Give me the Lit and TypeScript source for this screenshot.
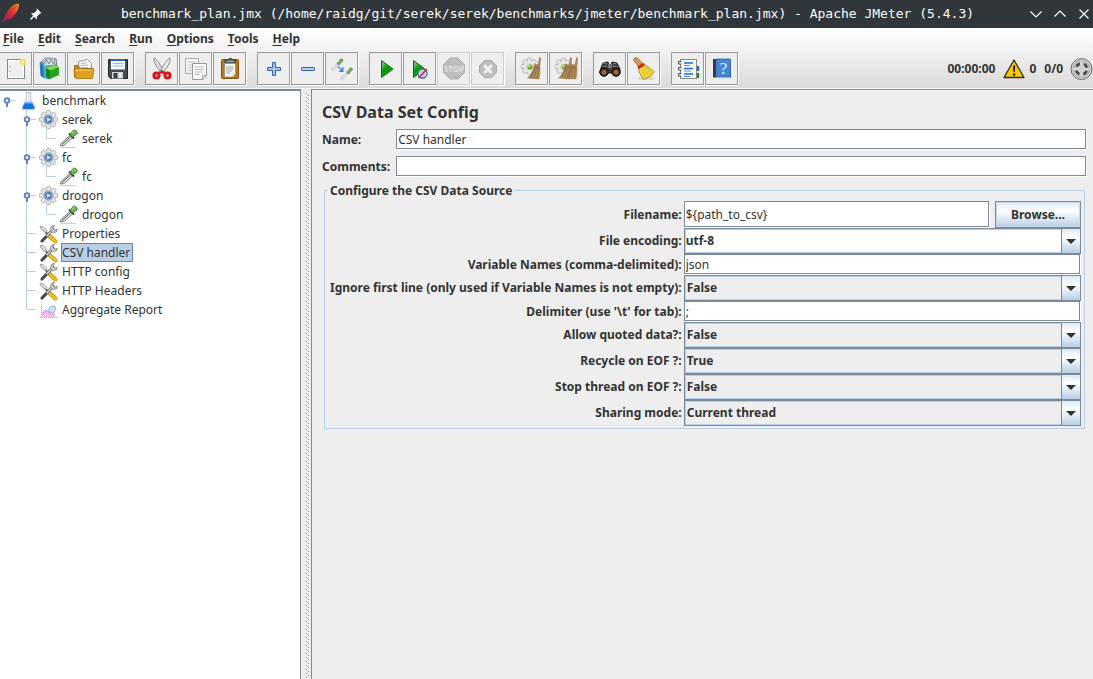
import { LitElement, html, css, svg, nothing } from "lit";
import { customElement, property, state } from "lit/decorators.js";

const gearTeeth = (cx: number, cy: number, r: number, w: number) =>
  Array.from({ length: 8 }, (_, i) => svg`<rect x=${cx - w / 2} y=${cy - r} width=${w} height=${r} rx="1" transform=${`rotate(${i * 45} ${cx} ${cy})`}/>`);

const broom = (dx: number) => svg`<g transform=${`translate(${dx} 0)`}>
  <path d="M19.500 .5l1.200.4-.7 8-2.200-.4z" fill="#b98a55" stroke="#8a6435" stroke-width=".4"/>
  <path d="M14.500 7l5 1.500c.8 4 .5 9-.5 13.500L7.500 21c4-3 6-8 7-14z" fill="#b08a5a" stroke="#94724a" stroke-width=".5"/>
  <path d="M16 9L10 21M17.500 9l-4 13M19 10l-2 12M15 11l-4 9" stroke="#86643a" stroke-width=".6" fill="none"/>
  <path d="M14 9.500l6 1.500" stroke="#a8553a" stroke-width=".8"/></g>`;

const smallGear = svg`<g fill="#dcdcdc" stroke="#b0b0b0" stroke-width=".8">${gearTeeth(9.5, 9.5, 8.5, 4)}<circle cx="9.500" cy="9.500" r="6.300" fill="#e4e4e4"/></g>
  <g fill="#e6e6e6">${gearTeeth(9.5, 9.5, 7.8, 3)}</g><circle cx="10" cy="10" r="3" fill="#62ad27" stroke="#c2cfb6"/><circle cx="9.300" cy="9" r="1.200" fill="#b9ee7c"/>`;

const toolIcons: Record<string, unknown> = {
  new: svg`<rect x="3.500" y="2.500" width="17" height="19" fill="#efefef" stroke="#8b8b8b"/><rect x="4.500" y="3.500" width="15" height="17" fill="none" stroke="#fff"/>
    <path d="M5 9.500h1.500M5 14.500h1.500" stroke="#aaa"/><circle cx="19" cy="5" r="3.600" fill="#fff9c0" opacity=".7"/><circle cx="19" cy="5" r="2.200" fill="#fff" stroke="#ecd936" stroke-width="1.300"/>`,
  templates: svg`<path d="M2 6l3-3 5-2 8 1 1 7-8 13-8-3z" fill="#3a93b9" stroke="#2b6d8c" stroke-width=".6"/>
    <path d="M4 4l3-3 11 .5.500 6-5 1-8 1z" fill="#d4dadc" stroke="#7d8a90" stroke-width=".8"/><path d="M6 8l2-6 3 5 2-5 3 5 1-5M9 2l-4 5" fill="none" stroke="#82929a"/>
    <path d="M2 8l3-1 1 14-3-2z" fill="#1e78c0"/><path d="M6 9l3-1v14l-3-1z" fill="#49b2dc"/>
    <path d="M8 11l8-3 5 2v8l-9 4-4-2z" fill="#28a321"/><path d="M8 11l8-3 5 2-9 3.500z" fill="#7ddc4d"/><path d="M8 11l4 2.500V22l-4-2z" fill="#178616"/>`,
  open: svg`<path d="M6.500 13V4.500l9-2 4 4V13z" fill="#f8f8f8" stroke="#999"/><path d="M9 6.500l6-1M9 8.500l7-.5M9 10.500h7" stroke="#aaa" stroke-width=".8"/>
    <path d="M2.500 20V8.500h4l1 3h13V20z" fill="#c98a1a" stroke="#8f5902" stroke-width=".8"/><path d="M2 12h20l-1.500 9.500h-17z" fill="#e0a128" stroke="#a96e08" stroke-width=".8"/><path d="M3.500 13h17" stroke="#ffd577"/>`,
  save: svg`<path d="M2.500 2.500h19v19h-17l-2-2z" fill="#484b4d" stroke="#242628"/><path d="M5 2.500h14v10H5z" fill="#eef5fb"/><path d="M5 2h14v2H5z" fill="#356ca8"/><path d="M6.500 6.500h11M6.500 9h11" stroke="#9ebed8"/>
    <path d="M6 15h11v6.500H6z" fill="#d4d6d5"/><rect x="7.500" y="16" width="4" height="5" fill="#393c3e"/><path d="M14 16v5" stroke="#fff"/>`,
  cut: svg`<path d="M4 1c2.500 0 8.500 11 10.500 14l-3 1C8.500 12 3 6 4 1z" fill="#dcdedc" stroke="#808280" stroke-width=".9"/><path d="M20 1c-2.500 0-8.500 11-10.500 14l3 1C15.500 12 21 6 20 1z" fill="#ececeb" stroke="#808280" stroke-width=".9"/>
    <circle cx="12" cy="13.500" r=".9" fill="#666"/><g fill="none" stroke="#d31a1a" stroke-width="3"><ellipse cx="6.500" cy="18.500" rx="2.600" ry="2.400"/><ellipse cx="17.500" cy="18.500" rx="2.600" ry="2.400"/><path d="M7.500 16.500l4-1.500 5 1.500" stroke-width="2.400"/></g>`,
  copy: svg`<path d="M1.500 1.500h13v15h-13z" fill="#f4f4f2" stroke="#aaa"/><path d="M4 5h8M4 8h5M4 11h5M4 13.500h5" stroke="#c2c2c2"/><path d="M8.500 6.500h14v12l-4 4h-10z" fill="#fbfbfa" stroke="#999"/><path d="M11 10h9M11 12.500h9M11 15h8M11 17.500h5" stroke="#b9b9b9"/><path d="M18.500 22.500v-4h4z" fill="#ddd" stroke="#999" stroke-width=".7"/>`,
  paste: svg`<rect x="3.500" y="2.500" width="17" height="19" rx="1" fill="#b9761d" stroke="#835108"/><path d="M6.500 5.500h11v12l-3 2.500h-8z" fill="#f5f5f3" stroke="#888" stroke-width=".7"/><path d="M8 10h7.500M8 12h7.500M8 14h6M8 16h4" stroke="#aaa"/><path d="M14.500 20v-3h3z" fill="#ccc"/>
    <path d="M7 6V3h3l1-1.500h2.500l1 1.500h3v3z" fill="#686a66" stroke="#3d3f3b"/><path d="M8.500 4.500H16" stroke="#aaa"/>`,
  plus: svg`<path d="M10.500 5.500h3v5h5v3h-5v5h-3v-5h-5v-3h5z" fill="#a4c3e5" stroke="#3465a4" stroke-linejoin="round"/>`,
  minus: svg`<rect x="5.500" y="10.500" width="13" height="3" rx=".5" fill="#b9d1eb" stroke="#3465a4"/>`,
  toggle: svg`${[[0, 0], [9.5, 9]].map(([x, y]) => svg`<g transform=${`translate(${x} ${y})`}><path d="M1.500 12.500l.5-1.500 5-4 1.500 1L4 12z" fill="#ececec" stroke="#b0b0b0" stroke-width=".7"/><path d="M7 5.500l2.500 2.500" stroke="#777" stroke-width="1.200"/><path d="M8 6l2-3.500c1-1.300 3.500-.5 3 1.200L9.500 7.500z" fill="#74aa5a" stroke="#6a9455" stroke-width=".6"/></g>`)}
    <path d="M7.500 9.500l4 3" stroke="#3a8cf5" stroke-width="1.300"/><path d="M13.500 9.500V15H8.500z" fill="#3a8cf5"/><path d="M1 14h5M10 23h6" stroke="#ddd"/>`,
  start: svg`<defs><linearGradient id="sg" x2=".6" y2="1"><stop offset="0" stop-color="#a4d8a0"/><stop offset=".5" stop-color="#109510"/><stop offset="1" stop-color="#00b000"/></linearGradient></defs><path d="M7.500 3.500L19 12 7.500 20.500z" fill="url(#sg)" stroke="#087008"/>`,
  startnp: svg`<defs><linearGradient id="sn" x2=".6" y2="1"><stop offset="0" stop-color="#a4d8a0"/><stop offset=".5" stop-color="#109510"/><stop offset="1" stop-color="#00b000"/></linearGradient></defs><path d="M5.500 3.500L17 12 5.500 20.500z" fill="url(#sn)" stroke="#087008"/><circle cx="14.500" cy="16.500" r="4.500" fill="#d7e3f3" stroke="#3867b0" stroke-width="1.300"/><path d="M12 15h5M12 18h5" stroke="#8aa7d4"/><path d="M10.500 21L19 12" stroke="#e51c1c" stroke-width="1.500"/>`,
  stop: svg`<path d="M8 1h8l6.500 6.500v8L16 22H8l-6.500-6.500v-8z" fill="#bdbdbd" stroke="#adadad"/><text x="12" y="15" text-anchor="middle" font-family="Open Sans, sans-serif" font-size="8" font-weight="bold" fill="#e2e2e2">STOP</text>`,
  shutdown: svg`<path d="M8.500 3.500h7l5 5v7l-5 5h-7l-5-5v-7z" fill="#bdbdbd" stroke="#aaa"/><path d="M9 9l6 6M15 9l-6 6" stroke="#f3f3f3" stroke-width="3" stroke-linecap="round"/>`,
  clear: svg`${smallGear}${broom(0)}`,
  clearall: svg`${smallGear}${broom(-3)}${broom(3)}`,
  search: svg`<path d="M3 11l2-5 5-1 1 3h2l1-3 5 1 3 6-1 4H2z" fill="#3c3c3c" stroke="#202020"/><path d="M5 6l4 1M15 7l3.500-1M4 10l5-1M15 9l5 1" stroke="#888" stroke-width="1.200"/><rect x="10" y="7" width="4" height="4" fill="#777"/>
    <circle cx="6" cy="15" r="4.300" fill="#292929" stroke="#111"/><circle cx="18" cy="15" r="4.300" fill="#292929" stroke="#111"/><circle cx="6" cy="15.300" r="2.500" fill="#a9622f"/><circle cx="18" cy="15.300" r="2.500" fill="#a9622f"/>`,
  reset: svg`<ellipse cx="14" cy="21.500" rx="9" ry="1.500" fill="#d0d0d0"/><path d="M1.500 3c0-2 3-3 4.500-1.500l5 5.500-4 3z" fill="#cd9b5a" stroke="#8f5d2c" stroke-width=".8"/><path d="M7 9.500l4.500-3L22 14.500l-3 4.500-7.500 3.500L7 15z" fill="#f0d83f" stroke="#aa8c09" stroke-width=".9"/>
    <path d="M10 13l3 7M12 11l5 7M13.500 9.500l6 7" stroke="#cdb024" stroke-width=".8"/><path d="M6 11L12 7" stroke="#d9221c" stroke-width="2.800"/>`,
  functions: svg`<path d="M20 9h3v5h-3z" fill="#2563d8"/><path d="M20 16h3v5h-3z" fill="#158528"/><rect x="4.500" y="2.500" width="16" height="19" fill="#fff" stroke="#888"/><path d="M8 6h9M8 11.500h9M8 17h9" stroke="#1b66e0" stroke-width="1.400"/><path d="M8 8.500h6M8 14h7M8 19.500h6" stroke="#1b66e0" stroke-width=".8"/>
    <g fill="#fff" stroke="#333" stroke-width=".9"><path d="M5.500 4.500H2.500v2.500h3M5.500 10.500H2.500V13h3M5.500 16.500H2.500V19h3"/></g>`,
  help: svg`<path d="M3 2h17l1 19H5l-2-1z" fill="#34373d"/><path d="M6 2h14.500v18H6z" fill="#4385d7" stroke="#2c62aa" stroke-width=".8"/><path d="M5 21h15.500" stroke="#ddd" stroke-width="1.500"/><text x="13.500" y="16.500" text-anchor="middle" font-family="Liberation Serif, serif" font-size="17" fill="#eaf4ff">?</text>`,
};

const treeIcons: Record<string, unknown> = {
  plan: svg`<path d="M7 1.500h5v1.500l-.5.5v4l4.500 9c.3 1-.2 2-1 2H4c-.8 0-1.300-1-1-2l4.500-9v-4z" fill="#dfe7ef" stroke="#b4bec8" stroke-width=".8"/><path d="M6 11.500h7l2.500 5c0 .8-.5 1.500-1 1.500h-10c-.5 0-1-.7-1-1.500z" fill="#1873e0"/><path d="M6 12h7" stroke="#73b7fa"/><path d="M9 3v6" stroke="#fff"/>`,
  group: svg`<g fill="#dcdcdc" stroke="#a0a0a0" stroke-width=".8">${gearTeeth(9.5, 9.5, 9, 4)}<circle cx="9.500" cy="9.500" r="7"/></g><g fill="#e6e6e6">${gearTeeth(9.5, 9.5, 8.4, 3.2)}<circle cx="9.500" cy="9.500" r="6.500"/></g><circle cx="9.500" cy="9.500" r="4.800" fill="#a9b9d0" stroke="#8896aa" stroke-width=".8"/><circle cx="9.500" cy="9.500" r="3.400" fill="#4f7ab5"/><path d="M8 7.200l4 2.300-4 2.300z" fill="#dbe8fa"/>`,
  sampler: svg`<path d="M2 18.500h15" stroke="#ccc"/><path d="M1 17l1.500-3L11 6.500l2.500 2.500-8.500 7.500z" fill="#dfe3e3" stroke="#707574" stroke-width=".9"/><path d="M3 15.500l8.500-7.500" stroke="#555" stroke-width="1"/><path d="M10 4.500l5 5" stroke="#343936" stroke-width="1.800"/><path d="M11 5.500l3-4c1.500-1.500 5.500 1 4 3.500L13.500 8z" fill="#6db450" stroke="#447d32" stroke-width=".8"/><path d="M13 4.500l3-2.500" stroke="#a3dc87"/>`,
  config: svg`<path d="M2.500 3.500L15 17" stroke="#686c6c" stroke-width="2"/><path d="M1 2.500l3 0 4 4L6.500 8.500 2 5z" fill="#ddd" stroke="#8b8b8b" stroke-width=".7"/><path d="M10.500 12l6 5.500" stroke="#b58200" stroke-width="4" stroke-linecap="round"/><path d="M10.500 12l6 5.500" stroke="#f3bf20" stroke-width="2.800" stroke-linecap="round"/>
    <path d="M3 17L14 5.500" stroke="#5c5f5f" stroke-width="3.200" stroke-linecap="round"/><path d="M3 17L14 5.500" stroke="#d2d5d4" stroke-width="1.600" stroke-linecap="round"/><path d="M7 13l-4 4" stroke="#444" stroke-width="2.400" stroke-linecap="round"/><path d="M15.500 1.500a3.500 3.500 0 1 0 3 4l-3 .8-1.800-1.800z" fill="#d5d8d7" stroke="#777" stroke-width=".8"/>`,
  report: svg`<path d="M2.500 2v16M1 17.500h17" stroke="#aaa" stroke-dasharray="1 1"/><path d="M3 17v-4l4-3 4 3 5-5v9z" fill="#f3bde6"/><path d="M3 13.500l4-3.500 4 3 5-6" fill="none" stroke="#e07bcb"/><path d="M10 11c-1-4 4-6 6-4.500 1.500 2-.5 6-3.500 7z" fill="#cfe0f8" stroke="#7ba3dc" stroke-width=".8"/>`,
};

interface TreeRow { label: string; depth: number; icon: string; open?: boolean; last?: boolean; }

const rows: TreeRow[] = [
  { label: "benchmark", depth: 0, icon: "plan", open: true },
  { label: "serek", depth: 1, icon: "group", open: true },
  { label: "serek", depth: 2, icon: "sampler" },
  { label: "fc", depth: 1, icon: "group", open: true },
  { label: "fc", depth: 2, icon: "sampler" },
  { label: "drogon", depth: 1, icon: "group", open: true },
  { label: "drogon", depth: 2, icon: "sampler" },
  { label: "Properties", depth: 1, icon: "config" },
  { label: "CSV handler", depth: 1, icon: "config" },
  { label: "HTTP config", depth: 1, icon: "config" },
  { label: "HTTP Headers", depth: 1, icon: "config" },
  { label: "Aggregate Report", depth: 1, icon: "report", last: true },
];

@customElement("plan-tree")
export class PlanTree extends LitElement {
  @state() private selected = 8;

  static styles = css`
    :host { display: block; background: #fff; color: #333; }
    ul { margin: 0; padding: 0; list-style: none; }
    .row { display: flex; align-items: center; height: 19px; }
    .row svg { flex: none; overflow: visible; }
    .label { font: inherit; color: inherit; background: none; border: 1px solid transparent; margin: 0 0 0 2px; padding: 0 2px 0 0; height: 19px; line-height: 17px; white-space: nowrap; }
    .label.selected { background: #b8cfe5; border-color: #6382bf; }
  `;

  private guide(r: TreeRow) {
    const x = r.depth * 20 + 6.5;
    return html`<svg width=${19 + r.depth * 20} height="19" aria-hidden="true">
      <g stroke="#b8cfe5" fill="none">
        ${r.depth > 0 ? svg`<path d=${r.last ? "M26.5 0V9.500" : "M26.5 0V19"}/>` : nothing}
        ${r.depth === 2 ? svg`<path d="M46.5 0V9.500"/>` : nothing}
        <path d=${`M${x} 9.500H${x + 9.5}`}/>
      </g>
      ${r.open ? svg`<path d=${`M${x + 0.5} 12V16`} stroke="#6382bf" stroke-width="2"/><circle cx=${x + 0.5} cy="9.500" r="2.300" fill="#fff" stroke="#6382bf" stroke-width="1.900"/>` : nothing}
    </svg>`;
  }

  render() {
    return html`<ul>${rows.map((r, i) => html`<li class="row">
      ${this.guide(r)}
      <svg width="20" height="19" viewBox="0 0 20 19" aria-hidden="true">${treeIcons[r.icon]}</svg>
      <button class="label ${i === this.selected ? "selected" : ""}" @click=${() => (this.selected = i)}>${r.label}</button>
    </li>`)}</ul>`;
  }
}

@customElement("metal-select")
export class MetalSelect extends LitElement {
  @property() value = "";
  @property() name = "";
  @property({ attribute: false }) options: string[] = [];
  @property({ type: Boolean, reflect: true }) editable = false;

  static styles = css`
    :host { display: block; position: relative; }
    select { appearance: none; box-sizing: border-box; display: block; width: 100%; height: 26px; margin: 0; padding: 0 22px 1px 2px; border: 1px solid #7a8a99; border-radius: 0; box-shadow: inset 0 0 0 1px #b8cfe5; background: #eee; color: #333; font: inherit; font-weight: bold; outline: none; }
    :host([editable]) select { background: #fff; padding-left: 1px; }
    .arrow { position: absolute; top: 0; right: 0; bottom: 0; width: 20px; box-sizing: border-box; border: 1px solid #7a8a99; background: linear-gradient(#dde8f3, #fff 35%, #b8cfe5); display: flex; align-items: center; justify-content: center; pointer-events: none; }
  `;

  render() {
    return html`<select aria-label=${this.name}>${this.options.map((o) => html`<option ?selected=${o === this.value}>${o}</option>`)}</select>
      <span class="arrow"><svg width="10" height="5" aria-hidden="true"><path d="M0 0h10L5 5z" fill="#333"/></svg></span>`;
  }
}

const groups: string[][] = [
  ["new", "templates", "open", "save"],
  ["cut", "copy", "paste"],
  ["plus", "minus", "toggle"],
  ["start", "startnp", "stop", "shutdown"],
  ["clear", "clearall"],
  ["search", "reset"],
  ["functions", "help"],
];

@customElement("app-root")
export class AppRoot extends LitElement {
  static styles = css`
    :host { display: flex; flex-direction: column; height: 100vh; overflow: hidden; background: #eee; color: #333; font: 12px/16px "Noto Sans", sans-serif; }
    * { box-sizing: border-box; }
    svg { display: block; flex: none; }
    .titlebar { display: grid; grid-template-columns: 72px 1fr 70px; align-items: center; height: 28px; flex: none; background: #31363b; color: #fcfcfc; }
    .brand { display: flex; align-items: center; gap: 8px; padding-left: 1px; }
    .title { margin: 0; text-align: center; white-space: nowrap; font: 13px/26px "DejaVu Sans Mono", monospace; }
    .window { display: flex; gap: 8px; justify-content: flex-end; padding-right: 1px; }
    .window button { width: 16px; height: 16px; padding: 0; border: 0; background: none; }
    .chrome { flex: none; background: linear-gradient(#fff, #dadada); }
    .menu { display: flex; gap: 14px; padding: 0 3px; height: 24px; }
    .menu button { padding: 0 0 2px; border: 0; background: none; font: inherit; font-weight: bold; color: inherit; }
    .menu u { text-underline-offset: 2px; }
    .toolbar { display: flex; justify-content: space-between; align-items: center; height: 36px; padding-bottom: 3px; }
    .groups { display: flex; gap: 11px; margin-left: -1px; }
    .group { display: flex; gap: 1px; }
    .tool { width: 33px; height: 33px; padding: 0; display: grid; place-items: center; border: 1px solid #999; background: #eee; box-shadow: 1px 1px 0 #fff; }
    .tool:disabled { border-color: #ccc; }
    .status { display: flex; align-items: center; font-weight: bold; }
    .clock { margin-right: 8px; }
    .errors { margin: 0 8px 0 4px; }
    .threads { margin-right: 6px; }
    .body { display: grid; grid-template-columns: 301px 10px minmax(0, 1fr); flex: 1; min-height: 0; border-top: 1px solid #f8f8f8; }
    plan-tree { border-top: 2px solid #7a8a99; border-right: 1px solid #7a8a99; overflow: auto; }
    .split { margin: 4px 2px 0 5px; background-image: conic-gradient(from 0deg at 1px 1px, transparent 75%, #7a8a99 0), conic-gradient(from 0deg at 1px 1px, transparent 75%, #7a8a99 0); background-size: 4px 4px; background-position: 0 0, 2px 2px; }
    .panel { border: 1px solid #7a8a99; border-width: 1px 0 0 1px; padding: 10px 7px 0 10px; overflow: auto; }
    h1 { margin: 0; font-size: 16px; line-height: 24px; }
    label { font-weight: bold; white-space: nowrap; }
    .head { display: grid; grid-template-columns: auto minmax(0, 1fr); gap: 6px; align-items: center; margin-top: 5px; }
    input { width: 100%; min-width: 0; height: 20px; margin: 0 0 1px; padding: 0 1px; border: 1px solid #7a8a99; border-radius: 0; box-shadow: 1px 1px 0 #fff; background: #fff; color: #333; font: inherit; outline: none; }
    fieldset { margin: 5px 1px 0 2px; padding: 2px 3px; border: 1px solid #b8cfe5; min-width: 0; }
    legend { padding: 0 2px; font-weight: bold; line-height: 17px; }
    .form { display: grid; grid-template-columns: auto minmax(0, 1fr); column-gap: 2px; align-items: center; }
    .form label { text-align: right; padding-left: 2px; }
    .form input { width: calc(100% - 1px); }
    .file { display: flex; gap: 6px; height: 27px; }
    .form .file input { flex: 1; height: 26px; }
    .browse { width: 86px; height: 27px; padding: 0; border: 1px solid #7a8a99; box-shadow: inset 0 0 0 1px #c8d9e9; background: linear-gradient(#dde8f3, #fff 35%, #b8cfe5); color: #333; font: inherit; font-weight: bold; }
  `;

  private menuItem = (name: string) => html`<button><u>${name[0]}</u>${name.slice(1)}</button>`;

  private textRow(id: string, label: string, value: string) {
    return html`<label for=${id}>${label}</label><input id=${id} .value=${value}>`;
  }

  private selectRow(label: string, value: string, options: string[], editable = false) {
    return html`<label>${label}</label><metal-select .name=${label} .value=${value} .options=${options} ?editable=${editable}></metal-select>`;
  }

  render() {
    const bool = ["True", "False"];
    return html`
      <header class="titlebar">
        <div class="brand">
          <svg width="20" height="22" viewBox="0 0 20 22" aria-hidden="true"><defs><linearGradient id="feather" x1="1" y1="0" x2="0" y2="1"><stop offset="0" stop-color="#f69923"/><stop offset=".35" stop-color="#e0402c"/><stop offset=".65" stop-color="#be2050"/><stop offset="1" stop-color="#6d2d80"/></linearGradient></defs><path d="M1 21c1-5 4-12 9-17 3-3 7-4 8-3 0 4-2 9-6 13-2 2-5 3-8 3z" fill="url(#feather)"/><path d="M2 19C6 12 10 7 16 3" stroke="#a62a49" stroke-width=".7" fill="none"/></svg>
          <svg width="14" height="14" viewBox="0 0 14 14" aria-hidden="true"><path d="M7.500 1L12.500 6l-1.500.5-3 3-.3 3L2 6.500 5 6l3-3z" fill="#fcfcfc"/><path d="M1.500 12.500L5 9" stroke="#fcfcfc" stroke-width="1.500"/></svg>
        </div>
        <p class="title">benchmark_plan.jmx (/home/raidg/git/serek/serek/benchmarks/jmeter/benchmark_plan.jmx) - Apache JMeter (5.4.3)</p>
        <div class="window">
          ${[["Minimize", "M2.500 5.500L8 11l5.500-5.500"], ["Maximize", "M2.500 10.500L8 5l5.500 5.500"], ["Close", "M3.500 3.500l9 9M12.500 3.500l-9 9"]].map(([n, d]) => html`<button aria-label=${n}><svg width="16" height="16"><path d=${d} fill="none" stroke="#fcfcfc" stroke-width="1.200"/></svg></button>`)}
        </div>
      </header>
      <div class="chrome">
        <nav class="menu">${["File", "Edit", "Search", "Run", "Options", "Tools", "Help"].map(this.menuItem)}</nav>
        <div class="toolbar">
          <div class="groups">${groups.map((g) => html`<div class="group">${g.map((n) => html`<button class="tool" aria-label=${n} ?disabled=${n === "stop" || n === "shutdown"}><svg width="24" height="24" viewBox="0 0 24 24">${toolIcons[n]}</svg></button>`)}</div>`)}</div>
          <div class="status">
            <span class="clock">00:00:00</span>
            <svg width="22" height="20" viewBox="0 0 22 20" aria-hidden="true"><path d="M11 1L21 18.500H1z" fill="#f7c900" stroke="#2e2b16" stroke-width="1.300" stroke-linejoin="round"/><path d="M10 6.500h2.200l-.5 6.500h-1.200z" fill="#111"/><rect x="10" y="14.500" width="2.200" height="2.200" fill="#111"/></svg>
            <span class="errors">0</span>
            <span class="threads">0/0</span>
            <svg width="24" height="24" viewBox="0 0 24 24" aria-hidden="true"><circle cx="12.500" cy="12" r="10.500" fill="#d8d8d8" stroke="#666"/><circle cx="12.500" cy="12" r="8.500" fill="#b9b9b9" stroke="#999" stroke-width=".6"/><circle cx="12.500" cy="12" r="5.500" fill="none" stroke="#444" stroke-width="2.600" stroke-dasharray="4.300 4.340" stroke-dashoffset="-2.170"/><path d="M12.500 4v16M4.500 12h16" stroke="#dedede" stroke-width="2"/><circle cx="12.500" cy="12" r="3.800" fill="#d0d0d0"/></svg>
          </div>
        </div>
      </div>
      <div class="body">
        <plan-tree></plan-tree>
        <div class="split"></div>
        <main class="panel">
          <h1>CSV Data Set Config</h1>
          <div class="head">
            ${this.textRow("name", "Name:", "CSV handler")}
            ${this.textRow("comments", "Comments:", "")}
          </div>
          <fieldset>
            <legend>Configure the CSV Data Source</legend>
            <div class="form">
              <label for="filename">Filename:</label>
              <div class="file"><input id="filename" .value=${"${path_to_csv}"}><button class="browse">Browse...</button></div>
              ${this.selectRow("File encoding:", "utf-8", ["utf-8", "UTF-16", "ISO-8859-15", "US-ASCII"], true)}
              ${this.textRow("variables", "Variable Names (comma-delimited):", "json")}
              ${this.selectRow("Ignore first line (only used if Variable Names is not empty):", "False", bool)}
              ${this.textRow("delimiter", "Delimiter (use '\\t' for tab):", ";")}
              ${this.selectRow("Allow quoted data?:", "False", bool)}
              ${this.selectRow("Recycle on EOF ?:", "True", bool)}
              ${this.selectRow("Stop thread on EOF ?:", "False", bool)}
              ${this.selectRow("Sharing mode:", "Current thread", ["All threads", "Current thread group", "Current thread"])}
            </div>
          </fieldset>
        </main>
      </div>`;
  }
}
